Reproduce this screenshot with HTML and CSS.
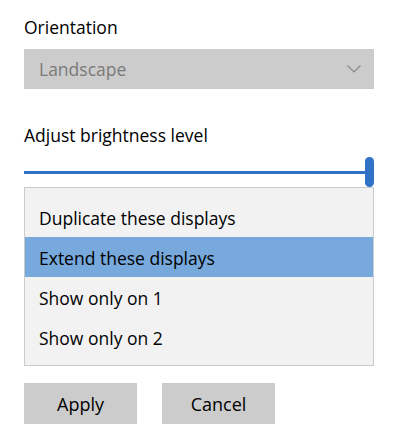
FILE: index.html
```html
<!DOCTYPE html>
<html>
<head>
<meta charset="utf-8">
<link rel="stylesheet" href="styles.css">
</head>
<body>
<div class="panel">
  <div class="label first">Orientation</div>
  <div class="select">
    <span class="select-text">Landscape</span>
    <svg class="chevron" width="14" height="8" viewBox="0 0 14 8"><polyline points="0.5,0.5 7,7 13.5,0.5" fill="none" stroke="#8a8a8a" stroke-width="1.2"/></svg>
  </div>
  <div class="label second">Adjust brightness level</div>
  <div class="slider">
    <div class="track"></div>
    <div class="thumb"></div>
  </div>
  <ul class="list">
    <li class="item">Duplicate these displays</li>
    <li class="item selected">Extend these displays</li>
    <li class="item">Show only on 1</li>
    <li class="item">Show only on 2</li>
  </ul>
  <div class="buttons">
    <button class="btn">Apply</button>
    <button class="btn">Cancel</button>
  </div>
</div>
</body>
</html>
```
FILE: styles.css
```css
html, body {
  margin: 0;
  padding: 0;
  background: #ffffff;
}
body {
  font-family: "Open Sans", "Noto Sans", sans-serif;
  font-size: 17.5px;
  color: #000000;
}
.panel {
  width: 350px;
  padding: 15px 24px 0 24px;
}
.label {
  line-height: 24px;
  height: 24px;
}
.label.second {
  margin-top: 34px;
}
.select {
  margin-top: 10px;
  height: 40px;
  background: #cccccc;
  display: flex;
  align-items: center;
  justify-content: space-between;
  padding: 0 13px 0 15px;
}
.select-text {
  color: #7a7a7a;
  line-height: 38px;
}
.chevron {
  display: block;
}
.slider {
  position: relative;
  height: 30px;
  margin-top: 10px;
  display: flex;
  align-items: center;
}
.track {
  flex: 1;
  height: 3px;
  background: #2f72c6;
}
.thumb {
  position: absolute;
  right: 0;
  top: 0;
  width: 9px;
  height: 30px;
  border-radius: 5px;
  background: #2f72c6;
}
.list {
  list-style: none;
  margin: 0;
  padding: 9px 0 8px 0;
  background: #f2f2f2;
  border: 1px solid #cbcbcb;
}
.item {
  height: 38px;
  line-height: 38px;
  padding: 2px 0 0 14px;
}
.item.selected {
  background: #77a9dc;
}
.buttons {
  margin-top: 17px;
  display: flex;
  gap: 25px;
}
.btn {
  width: 113px;
  height: 41px;
  border: none;
  background: #cccccc;
  font-family: inherit;
  font-size: 18px;
  color: #000000;
  padding: 0;
}
```
